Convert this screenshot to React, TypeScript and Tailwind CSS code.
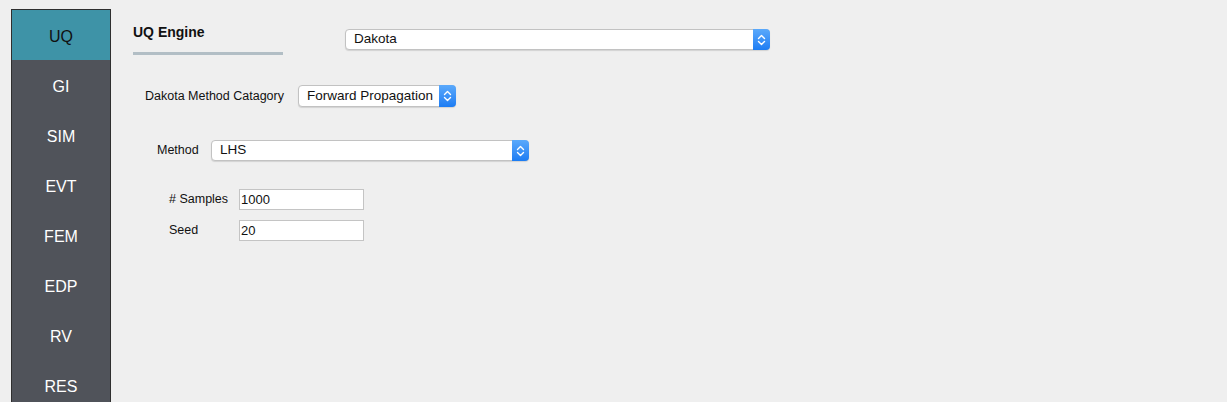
import React from 'react';

const tabs = ['UQ', 'GI', 'SIM', 'EVT', 'FEM', 'EDP', 'RV', 'RES'];

const Select = ({ value, width, height }: { value: string; width: string; height: string }) => (
  <div
    className={`flex items-stretch bg-white border border-[#c2c2c2] rounded-[4px] shadow-[0_1px_1px_rgba(0,0,0,0.12)] ${width} ${height}`}
  >
    <div className="flex-1 flex items-center pl-[8px] text-[13.5px] text-[#111]">{value}</div>
    <div className="w-[17px] -my-px -mr-px rounded-r-[4px] bg-gradient-to-b from-[#5aa9fb] to-[#1b7cf3] flex items-center justify-center">
      <svg width="9" height="12" viewBox="0 0 9 12" fill="none" stroke="white" strokeWidth="1.4" strokeLinecap="round" strokeLinejoin="round">
        <path d="M1.5 4.5 L4.5 1.5 L7.5 4.5" />
        <path d="M1.5 7.5 L4.5 10.5 L7.5 7.5" />
      </svg>
    </div>
  </div>
);

const Field = ({ label, value }: { label: string; value: string }) => (
  <div className="flex items-center h-[21px]">
    <div className="w-[70px] text-[12.5px] text-[#111]">{label}</div>
    <div className="w-[125px] h-[21px] bg-white border border-[#c4c4c4] flex items-center pl-[1px] text-[13px] text-[#111]">
      {value}
    </div>
  </div>
);

export default function App() {
  return (
    <div
      className="w-[1227px] h-[402px] bg-[#efefef] flex overflow-hidden"
      style={{ fontFamily: '"Liberation Sans", Arial, sans-serif' }}
    >
      <div className="ml-[11px] mt-[9px] w-[100px] h-[420px] border border-[#2f2f2f] bg-[#50535a] flex flex-col shrink-0">
        {tabs.map((t, i) => (
          <div
            key={t}
            className={`h-[50px] shrink-0 flex items-center justify-center pt-[3px] text-[16px] ${
              i === 0 ? 'bg-[#3e93a7] text-[#111]' : 'text-white'
            }`}
          >
            {t}
          </div>
        ))}
      </div>

      <div className="pl-[22px] flex flex-col">
        <div className="flex pt-[23px]">
          <div className="w-[150px] flex flex-col">
            <div className="h-[18px] text-[14px] font-bold text-[#111] leading-[18px]">UQ Engine</div>
            <div className="mt-[11px] h-[3px] bg-[#b2bec5]" />
          </div>
          <div className="ml-[62px] mt-[6px]">
            <Select value="Dakota" width="w-[425px]" height="h-[21px]" />
          </div>
        </div>

        <div className="flex items-center ml-[12px] mt-[30px]">
          <div className="text-[12.5px] text-[#111] w-[153px]">Dakota Method Catagory</div>
          <Select value="Forward Propagation" width="w-[158px]" height="h-[22px]" />
        </div>

        <div className="flex items-center ml-[24px] mt-[33px]">
          <div className="text-[12.5px] text-[#111] w-[54px]">Method</div>
          <Select value="LHS" width="w-[318px]" height="h-[21px]" />
        </div>

        <div className="flex flex-col gap-[10px] ml-[36px] mt-[28px]">
          <Field label="# Samples" value="1000" />
          <Field label="Seed" value="20" />
        </div>
      </div>
    </div>
  );
}
